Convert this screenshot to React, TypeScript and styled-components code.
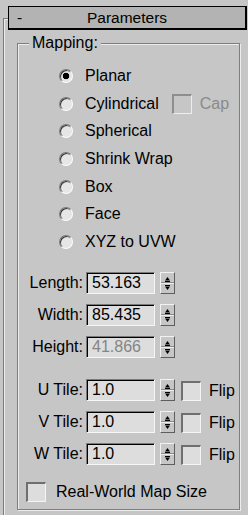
import React from 'react'
import styled, { createGlobalStyle } from 'styled-components'

const BG = '#c6c6c6'

const GlobalStyle = createGlobalStyle`
  html, body {
    margin: 0;
    padding: 0;
    background: ${BG};
  }
  body {
    font-family: "Liberation Sans", Arial, sans-serif;
    color: #000;
  }
`

const Frame = styled.div`
  position: relative;
  width: 248px;
  height: 515px;
  box-sizing: border-box;
  padding-top: 6px;
  overflow: hidden;
  /* rollout bracket on the left edge */
  &::before {
    content: '';
    position: absolute;
    left: 3px;
    top: 18px;
    bottom: -2px;
    width: 4px;
    border-left: 1px solid #7b7b7b;
    border-top: 1px solid #7b7b7b;
    box-shadow: inset 1px 1px 0 #ececec;
  }
`

const TitleBar = styled.div`
  margin-left: 8px;
  width: 239px;
  height: 24px;
  box-sizing: border-box;
  border: 1px solid #000;
  border-right-width: 2px;
  border-bottom-width: 2px;
  background: #b3b3b3;
  display: grid;
  grid-template-columns: 20px 1fr 20px;
  align-items: center;
  font-size: 15.5px;
  line-height: 18px;
`

const Collapse = styled.span`
  padding-left: 8px;
`

const Title = styled.span`
  text-align: center;
`

const GroupBox = styled.div`
  margin: 13px 0 0 17px;
  width: 223px;
  height: 467px;
  box-sizing: border-box;
  border: 1px solid #7e7e7e;
  box-shadow: inset 1px 1px 0 #ececec, 1px 1px 0 #ececec;
  display: flex;
  flex-direction: column;
`

const Legend = styled.span`
  align-self: flex-start;
  margin: -10px 0 0 11px;
  padding: 0 3px;
  background: ${BG};
  font-size: 16px;
  line-height: 18px;
`

const RadioList = styled.div`
  margin-top: 10px;
  padding-left: 41px;
  display: flex;
  flex-direction: column;
`

const RadioRow = styled.label`
  height: 27.7px;
  display: flex;
  align-items: center;
  font-size: 16px;
`

const RadioDot = styled.span<{ $checked?: boolean }>`
  width: 14px;
  height: 14px;
  box-sizing: border-box;
  border-radius: 50%;
  border: 1px solid;
  border-color: #7a7a7a #fdfdfd #fdfdfd #7a7a7a;
  box-shadow: inset 1px 1px 0 #353535;
  background: ${(p) =>
    p.$checked
      ? 'radial-gradient(circle at 6px 6px, #000 0 3px, #e6e6e6 3.6px)'
      : '#e6e6e6'};
  margin-right: 12px;
`

const CapBox = styled.span`
  display: flex;
  align-items: center;
  gap: 8px;
  margin-left: 13px;
  color: #8a8a8a;
`

const Check = styled.span<{ $disabled?: boolean }>`
  width: 20px;
  height: 20px;
  box-sizing: border-box;
  border: 2px solid;
  border-color: ${(p) =>
    p.$disabled ? '#8e8e8e #eeeeee #eeeeee #8e8e8e' : '#6f6f6f #f4f4f4 #f4f4f4 #6f6f6f'};
  border-right-width: 1px;
  border-bottom-width: 1px;
  background: ${(p) => (p.$disabled ? BG : '#dddddd')};
  flex: none;
`

const ParamGroup = styled.div<{ $top: number }>`
  margin-top: ${(p) => p.$top}px;
  display: flex;
  flex-direction: column;
  gap: 10px;
`

const ParamRow = styled.div`
  height: 22px;
  display: flex;
  align-items: center;
  font-size: 16px;
`

const ParamLabel = styled.span`
  width: 65px;
  text-align: right;
  white-space: nowrap;
`

const Field = styled.div<{ $disabled?: boolean }>`
  margin-left: 3px;
  width: 69px;
  height: 22px;
  box-sizing: border-box;
  border: 1px solid;
  border-color: #7a7a7a #f6f6f6 #f6f6f6 #7a7a7a;
  box-shadow: inset 1px 1px 0 #000;
  background: #dddddd;
  padding-left: 5px;
  display: flex;
  align-items: center;
  color: ${(p) => (p.$disabled ? '#858585' : '#000')};
`

const Spinner = styled.div`
  margin-left: 5px;
  width: 15px;
  height: 22px;
  box-sizing: border-box;
  border: 1px solid;
  border-color: #f2f2f2 #5e5e5e #5e5e5e #f2f2f2;
  background: ${BG};
  display: flex;
`

const TileCheck = styled.span`
  margin: 3px 0 0 6px;
  display: flex;
`

const Flip = styled.span`
  margin: 3px 0 0 8px;
`

const RealWorld = styled.label`
  margin: 17px 0 0 8px;
  display: flex;
  align-items: center;
  gap: 10px;
  font-size: 16px;
`

const SpinArrows = () => (
  <svg width="13" height="20" viewBox="0 0 13 20">
    <polygon points="4,7.5 6.5,4 9,7.5" fill="#000" />
    <line x1="4" y1="8.5" x2="9" y2="8.5" stroke="#000" />
    <line x1="0" y1="9.5" x2="13" y2="9.5" stroke="#8a8a8a" />
    <line x1="0" y1="10.5" x2="13" y2="10.5" stroke="#ededed" />
    <line x1="4" y1="12.5" x2="9" y2="12.5" stroke="#000" />
    <polygon points="4,13.5 9,13.5 6.5,17" fill="#000" />
  </svg>
)

const mappings = ['Planar', 'Cylindrical', 'Spherical', 'Shrink Wrap', 'Box', 'Face', 'XYZ to UVW']

const dims = [
  { label: 'Length:', value: '53.163' },
  { label: 'Width:', value: '85.435' },
  { label: 'Height:', value: '41.866', disabled: true },
]

const tiles = ['U Tile:', 'V Tile:', 'W Tile:']

export default function App() {
  return (
    <Frame>
      <GlobalStyle />
      <TitleBar>
        <Collapse>-</Collapse>
        <Title>Parameters</Title>
        <span />
      </TitleBar>

      <GroupBox>
        <Legend>Mapping:</Legend>

        <RadioList>
          {mappings.map((m, i) => (
            <RadioRow key={m}>
              <RadioDot $checked={i === 0} />
              {m}
              {m === 'Cylindrical' && (
                <CapBox>
                  <Check $disabled />
                  Cap
                </CapBox>
              )}
            </RadioRow>
          ))}
        </RadioList>

        <ParamGroup $top={16}>
          {dims.map((d) => (
            <ParamRow key={d.label}>
              <ParamLabel>{d.label}</ParamLabel>
              <Field $disabled={d.disabled}>{d.value}</Field>
              <Spinner>
                <SpinArrows />
              </Spinner>
            </ParamRow>
          ))}
        </ParamGroup>

        <ParamGroup $top={21}>
          {tiles.map((t) => (
            <ParamRow key={t}>
              <ParamLabel>{t}</ParamLabel>
              <Field>1.0</Field>
              <Spinner>
                <SpinArrows />
              </Spinner>
              <TileCheck>
                <Check />
              </TileCheck>
              <Flip>Flip</Flip>
            </ParamRow>
          ))}
        </ParamGroup>

        <RealWorld>
          <Check />
          Real-World Map Size
        </RealWorld>
      </GroupBox>
    </Frame>
  )
}
